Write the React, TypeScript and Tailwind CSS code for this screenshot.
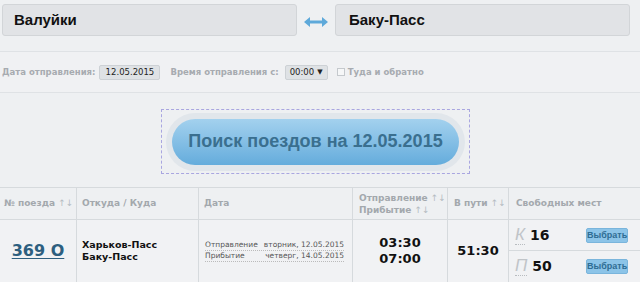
import React from 'react'

const verdana = { fontFamily: '"DejaVu Sans", Verdana, sans-serif' }
const arial = { fontFamily: '"Liberation Sans", Arial, sans-serif' }

function SwapArrow() {
  return (
    <svg width="24" height="10" viewBox="0 0 24 10">
      <path d="M0 5 L6 0 L6 3.4 L18 3.4 L18 0 L24 5 L18 10 L18 6.6 L6 6.6 L6 10 Z" fill="#5ea9da" />
    </svg>
  )
}

function SortMark() {
  return <span className="text-[#b5bcc2] font-normal">↑↓</span>
}

function SelectButton() {
  return (
    <button
      className="w-[42px] h-[15px] rounded-[2px] bg-[#8cc4e8] border border-[#7ab5dc] text-[9px] font-bold text-[#2f6d94] leading-none"
      style={arial}
    >
      Выбрать
    </button>
  )
}

function SeatRow({ letter, count, last }: { letter: string; count: number; last?: boolean }) {
  return (
    <div className={`flex items-center justify-between pl-[6px] pr-[12px] h-[31px] ${last ? '' : 'border-b border-[#d6dadd]'}`}>
      <div className="flex items-baseline gap-[5px]">
        <span className="text-[17px] italic text-[#c0c4c8] border-b border-dotted border-[#b8bcc0] leading-[18px]" style={arial}>
          {letter}
        </span>
        <span className="text-[14px] font-bold text-[#111]">{count}</span>
      </div>
      <SelectButton />
    </div>
  )
}

export default function App() {
  return (
    <div className="w-[640px] h-[282px] overflow-hidden bg-[#eef0f2]" style={verdana}>
      {/* Stations */}
      <div className="flex items-center pt-[4px] pl-[2px] pr-[10px]">
        <div className="w-[295px] h-[32px] flex items-center pl-[11px] rounded-[3px] bg-[#e1e3e6] border border-[#d2d5d8] text-[15px] font-bold text-[#111]" style={arial}>
          Валуйки
        </div>
        <div className="w-[38px] flex justify-center pt-[4px]">
          <SwapArrow />
        </div>
        <div className="flex-1 h-[32px] flex items-center pl-[13px] rounded-[3px] bg-[#e1e3e6] border border-[#d2d5d8] text-[15px] font-bold text-[#111]" style={arial}>
          Баку-Пасс
        </div>
      </div>

      {/* Filters */}
      <div className="mt-[15px] h-[42px] border-y border-[#dfe2e5] bg-[#f0f1f3] flex items-center pl-[2px] text-[8.5px] font-bold text-[#a7abb0] whitespace-nowrap">
        <span>Дата отправления:</span>
        <span className="ml-[4px] w-[61px] h-[15px] flex items-center justify-center bg-[#dfe2e5] border border-[#cdd1d5] rounded-[2px] font-normal text-[#222]">
          12.05.2015
        </span>
        <span className="ml-[10px]">Время отправления с:</span>
        <span className="ml-[6px] w-[43px] h-[15px] flex items-center justify-between px-[4px] bg-[#dfe2e5] border border-[#cdd1d5] rounded-[2px] font-normal text-[#222]">
          00:00 <span className="text-[7px]">▼</span>
        </span>
        <span className="ml-[9px] w-[8px] h-[8px] border border-[#c5c9cd] bg-[#f6f7f8]" />
        <span className="ml-[3px]">Туда и обратно</span>
      </div>

      {/* Search button */}
      <div className="flex justify-center pt-[16px] pr-[9px]">
        <div className="w-[309px] h-[65px] border border-dashed border-[#a9a6e0] flex items-center justify-center">
          <div className="rounded-full bg-[#e1e6eb] p-[6px]">
            <div className="w-[287px] h-[46px] rounded-full bg-gradient-to-b from-[#a3d1ee] to-[#64acdc] flex items-center justify-center text-[18px] font-bold text-[#3a6f8f]" style={arial}>
              Поиск поездов на 12.05.2015
            </div>
          </div>
        </div>
      </div>

      {/* Table */}
      <div className="mt-[13px] border-t border-[#d6dadd] whitespace-nowrap">
        <div className="grid grid-cols-[77px_122px_154px_95px_61px_1fr] h-[32px] border-b border-[#d6dadd] text-[9px] font-bold text-[#a3a8ad]">
          <div className="flex items-center pl-[4px] border-r border-[#d6dadd]">
            № поезда&nbsp;<SortMark />
          </div>
          <div className="flex items-center pl-[5px] border-r border-[#d6dadd]">Откуда / Куда</div>
          <div className="flex items-center pl-[5px] border-r border-[#d6dadd]">Дата</div>
          <div className="flex flex-col justify-center pl-[6px] border-r border-[#d6dadd] leading-[12px]">
            <span>Отправление <SortMark /></span>
            <span>Прибытие <SortMark /></span>
          </div>
          <div className="flex items-center pl-[6px] border-r border-[#d6dadd]">
            В пути&nbsp;<SortMark />
          </div>
          <div className="flex items-center pl-[7px]">Свободных мест</div>
        </div>

        <div className="grid grid-cols-[77px_122px_154px_95px_61px_1fr] h-[62px] bg-[#f1f2f4]">
          <div className="flex items-center justify-center border-r border-[#d6dadd]">
            <a className="text-[16px] font-bold text-[#2d5f7f] underline underline-offset-2">369 О</a>
          </div>
          <div className="flex flex-col justify-center pl-[5px] border-r border-[#d6dadd] text-[9.5px] font-bold text-[#111] leading-[12px]">
            <span>Харьков-Пасс</span>
            <span>Баку-Пасс</span>
          </div>
          <div className="flex flex-col justify-center pl-[6px] pr-[8px] border-r border-[#d6dadd] text-[7.5px] text-[#555] leading-[10px]">
            <div className="flex justify-between border-b border-dotted border-[#bbb]">
              <span>Отправление</span>
              <span>вторник, 12.05.2015</span>
            </div>
            <div className="flex justify-between border-b border-dotted border-[#bbb]">
              <span>Прибытие</span>
              <span>четверг, 14.05.2015</span>
            </div>
          </div>
          <div className="flex flex-col items-center justify-center border-r border-[#d6dadd] text-[13px] font-bold text-[#111] leading-[16px]">
            <span>03:30</span>
            <span>07:00</span>
          </div>
          <div className="flex items-center justify-center border-r border-[#d6dadd] text-[13px] font-bold text-[#111]">
            51:30
          </div>
          <div className="flex flex-col">
            <SeatRow letter="К" count={16} />
            <SeatRow letter="П" count={50} last />
          </div>
        </div>
      </div>
    </div>
  )
}
